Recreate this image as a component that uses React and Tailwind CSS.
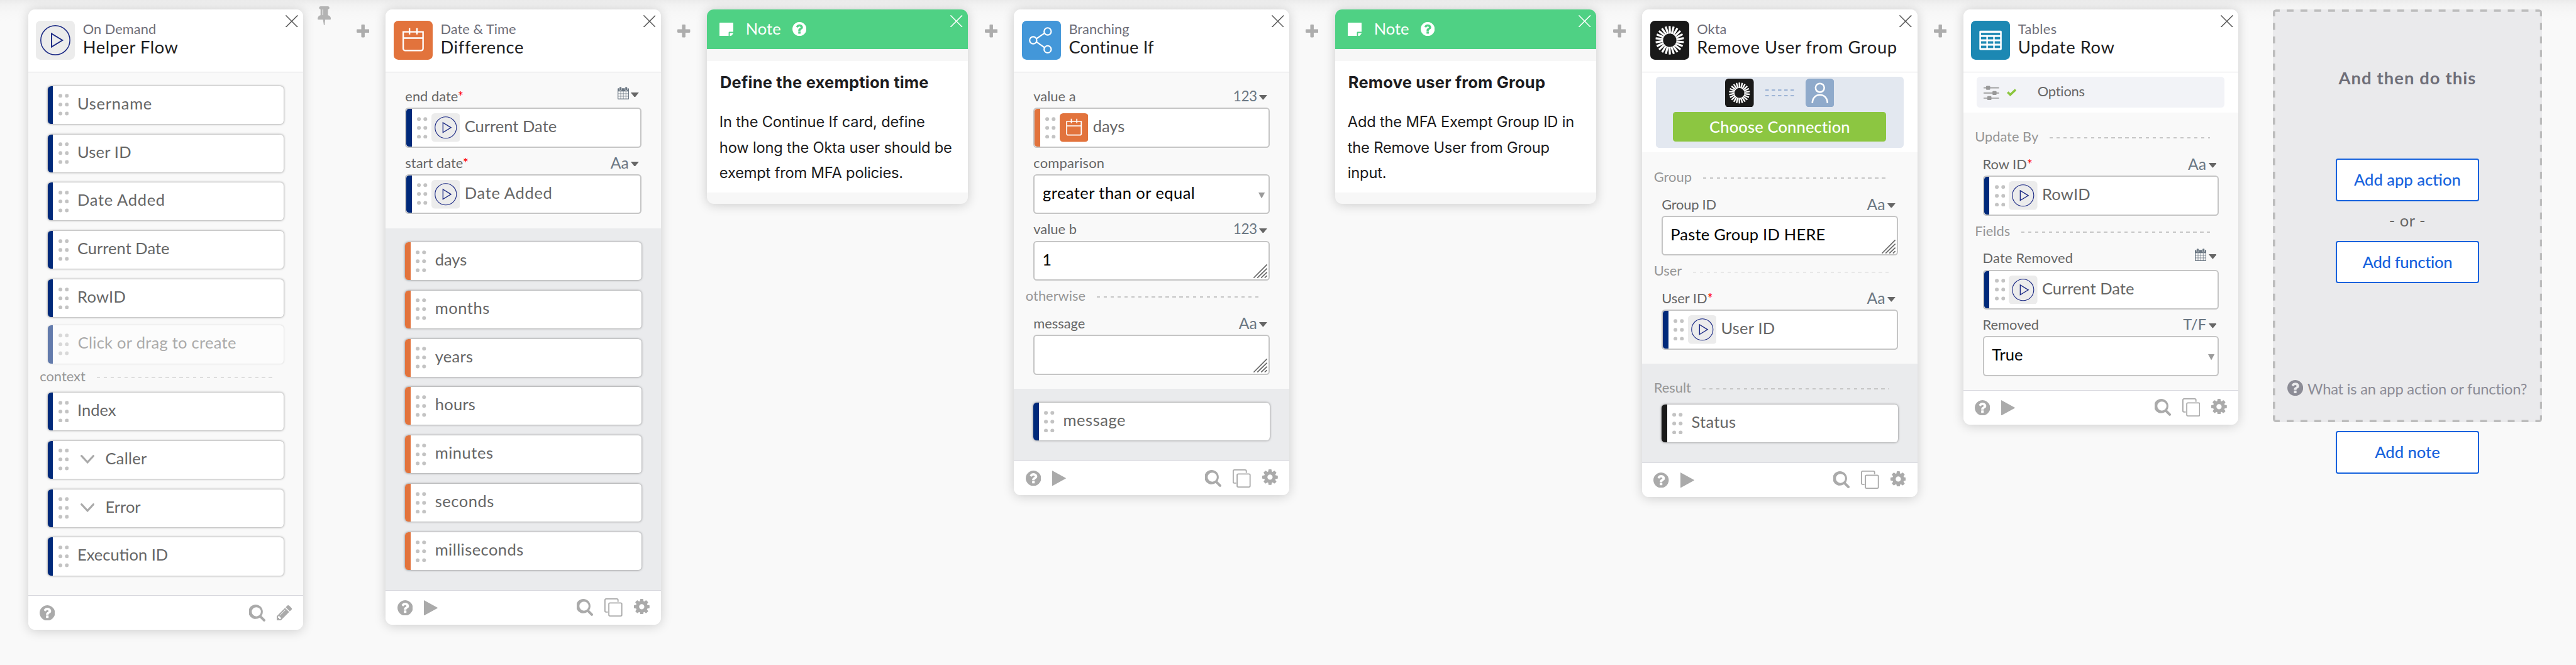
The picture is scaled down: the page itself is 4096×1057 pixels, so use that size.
import React from "react";

/* ---------- icons ---------- */

function HelpIcon({ className }) {
  return (
    <svg viewBox="128 128 1536 1536" fill="currentColor" className={className}>
      <path d="M1024 1376v-192q0-14-9-23t-23-9h-192q-14 0-23 9t-9 23v192q0 14 9 23t23 9h192q14 0 23-9t9-23zM1280 704q0-88-55.5-163t-138.5-116-170-41q-243 0-371 213-15 24 8 42l132 100q7 6 19 6 16 0 25-12 53-68 86-92 34-24 86-24 48 0 85.5 26t37.5 59q0 38-20 61t-68 45q-63 28-115.5 86.5t-52.5 125.5v36q0 14 9 23t23 9h192q14 0 23-9t9-23q0-19 21.5-49.5t54.5-49.5q32-18 49-28.5t46-35 44.5-48 28-60.5 12.5-81zM1664 896q0 209-103 385.5t-279.5 279.5-385.5 103-385.5-103-279.5-279.5-103-385.5 103-385.5 279.5-279.5 385.5-103 385.5 103 279.5 279.5 103 385.5z" />
    </svg>
  );
}

function SearchIcon() {
  return (
    <svg viewBox="64 128 1600 1664" fill="currentColor" className="h-[14.8px] w-[14.4px]">
      <path d="M1216 832q0-185-131.5-316.5t-316.5-131.5-316.5 131.5-131.5 316.5 131.5 316.5 316.5 131.5 316.5-131.5 131.5-316.5zM1664 1664q0 52-38 90t-90 38q-54 0-90-38l-343-342q-179 124-399 124-143 0-273.5-55.5t-225-150-150-225-55.5-273.5 55.5-273.5 150-225 225-150 273.5-55.5 273.5 55.5 225 150 150 225 55.5 273.5q0 220-124 399l343 343q37 37 37 90z" />
    </svg>
  );
}

function GearIcon() {
  return (
    <svg viewBox="128 128 1536 1536" fill="currentColor" className="mb-[2px] size-[13.6px]">
      <path d="M1152 896q0-106-75-181t-181-75-181 75-75 181 75 181 181 75 181-75 75-181zm512-109v222q0 12-8 23t-20 13l-185 28q-19 54-39 91 35 50 107 138 10 12 10 25t-9 23q-27 37-99 108t-94 71q-12 0-26-9l-138-108q-44 23-91 38-16 136-29 186-7 28-36 28h-222q-14 0-24.5-8.5t-11.5-21.5l-28-184q-49-16-90-37l-141 107q-10 9-25 9-14 0-25-11-126-114-165-168-7-10-7-23 0-12 8-23 15-21 51-66.5t54-70.5q-27-50-41-99l-183-27q-13-2-21-12.5t-8-23.5v-222q0-12 8-23t19-13l186-28q14-46 39-92-40-57-107-138-10-12-10-24 0-10 9-23 26-36 98.5-107.5t94.5-71.5q13 0 26 10l138 107q44-23 91-38 16-136 29-186 7-28 36-28h222q14 0 24.5 8.5t11.5 21.5l28 184q49 16 90 37l142-107q9-9 24-9 13 0 25 10 129 119 165 170 7 8 7 22 0 12-8 23-15 21-51 66.5t-54 70.5q26 50 41 98l183 28q13 2 21 12.5t8 23.5z" />
    </svg>
  );
}

function PencilIcon() {
  return (
    <svg viewBox="128 149 1515 1515" fill="currentColor" className="size-[13.2px]">
      <path d="M491 1536l91-91-235-235-91 91v107h128v128h107zm523-928q0-22-22-22-10 0-17 7l-542 542q-7 7-7 17 0 22 22 22 10 0 17-7l542-542q7-7 7-17zm-54-192l416 416-832 832h-416v-416zm683 96q0 53-37 90l-166 166-416-416 166-165q36-38 90-38 53 0 91 38l235 234q37 39 37 91z" />
    </svg>
  );
}

function PinIcon() {
  return (
    <svg viewBox="320 128 1152 1664" fill="currentColor" className="h-[16.8px] w-[11.6px] text-[#b3b3b3]">
      <path d="M800 864v-448q0-14-9-23t-23-9-23 9-9 23v448q0 14 9 23t23 9 23-9 9-23zm672 352q0 26-19 45t-45 19h-429l-51 483q-2 12-10.5 20.5t-20.5 8.5h-1q-27 0-32-27l-76-485h-404q-26 0-45-19t-19-45q0-123 78.5-221.5t177.5-98.5v-512q-52 0-90-38t-38-90 38-90 90-38h640q52 0 90 38t38 90-38 90-90 38v512q99 0 177.5 98.5t78.5 221.5z" />
    </svg>
  );
}

function CopyIcon() {
  return (
    <svg viewBox="0 0 15.7 16" fill="none" stroke="currentColor" strokeWidth="1" className="h-[16px] w-[15.7px]">
      <path d="M3.1 12H1.5a1 1 0 0 1-1-1V1.5a1 1 0 0 1 1-1h9.4a1 1 0 0 1 1 1v1.6" />
      <rect x="3.9" y="4" width="11.3" height="11.4" rx="1" />
    </svg>
  );
}

function PlayGlyph() {
  return (
    <svg viewBox="0 0 12 13.4" fill="currentColor" className="h-[13.4px] w-[12px]">
      <path d="M0.3 0.1Q0 -0.1 0 0.4V13Q0 13.5 0.3 13.3L11.8 6.95Q12.2 6.7 11.8 6.45Z" />
    </svg>
  );
}

function CloseIcon({ className }) {
  return (
    <svg viewBox="0 0 10.8 10.8" fill="none" stroke="currentColor" strokeWidth="0.85" className={className}>
      <path d="M0.2 0.2L10.6 10.6M10.6 0.2L0.2 10.6" />
    </svg>
  );
}

function PlusIcon() {
  return (
    <svg viewBox="0 0 11.2 11.2" fill="#adadad" className="size-[11.2px]">
      <rect x="0" y="4.1" width="11.2" height="3" rx="0.6" />
      <rect x="4.1" y="0" width="3" height="11.2" rx="0.6" />
    </svg>
  );
}

function FlowTile({ className }) {
  return (
    <svg viewBox="0 0 34 34" fill="none" className={className}>
      <rect width="34" height="34" rx="4" fill="#ececec" />
      <circle cx="17" cy="17" r="12.7" stroke="#1d2b86" strokeWidth="0.85" />
      <path d="M13.7 11.2V22.8L23.2 17Z" stroke="#1d2b86" strokeWidth="1.05" />
    </svg>
  );
}

function DateTile({ className }) {
  return (
    <svg viewBox="0 0 34 34" fill="none" stroke="#fff" strokeWidth="1.3" className={className}>
      <rect width="34" height="34" rx="4" fill="#e2733c" stroke="none" />
      <path d="M8.3 9.7H25.6V24.2a1.7 1.7 0 0 1-1.7 1.7H10a1.7 1.7 0 0 1-1.7-1.7Z" />
      <path d="M8.3 15.1H25.6M13.8 6.5V12M20.3 6.5V12" />
    </svg>
  );
}

function BranchTile({ className }) {
  return (
    <svg viewBox="0 0 34 34" fill="none" stroke="#fff" strokeWidth="1.15" className={className}>
      <rect width="34" height="34" rx="4" fill="#4397d9" stroke="none" />
      <circle cx="9.8" cy="17" r="3.1" />
      <circle cx="22.4" cy="9.3" r="3.1" />
      <circle cx="22.4" cy="24.9" r="3.1" />
      <path d="M12.7 15.6L19.5 10.9M12.7 18.5L19.5 23.3" />
    </svg>
  );
}

const RAYS = Array.from({ length: 22 }, (_, i) => (360 / 22) * i);

function OktaTile({ className }) {
  return (
    <svg viewBox="0 0 34 34" fill="none" stroke="#fff" strokeWidth="1.75" className={className}>
      <rect width="34" height="34" rx="4" fill="#191919" stroke="none" />
      {RAYS.map((a) => (
        <path key={a} d="M17.2 11.2L16.9 4.6" transform={`rotate(${a} 17 17)`} />
      ))}
    </svg>
  );
}

function TableTile({ className }) {
  return (
    <svg viewBox="0 0 34 34" className={className}>
      <rect width="34" height="34" rx="4" fill="#1c88b3" />
      <rect x="7.3" y="8.7" width="19.5" height="16.8" rx="0.9" fill="#fff" />
      <g fill="#1c88b3">
        <rect x="8.7" y="10.5" width="16.7" height="2" />
        {[14.1, 17.9, 21.7].map((y) =>
          [8.7, 14.7, 20.7].map((x) => <rect key={`${x}-${y}`} x={x} y={y} width="4.7" height="2.1" />)
        )}
      </g>
    </svg>
  );
}

function PersonTile() {
  return (
    <svg viewBox="0 0 25 25" fill="none" stroke="#fff" strokeWidth="1.4" className="size-[25px]">
      <rect width="25" height="25" rx="3.2" fill="#8faacb" stroke="none" />
      <circle cx="12.5" cy="8" r="3.8" />
      <path d="M5.9 21.4C5.9 17 8.8 14.1 12.5 14.1S19.1 17 19.1 21.4" />
    </svg>
  );
}

function NoteIcon() {
  return (
    <svg viewBox="0 0 12.2 12" fill="#fff" className="mt-[11.5px] h-[12px] w-[12.2px]">
      <path d="M.6 0H11.6a.6 .6 0 0 1 .6 .6V8H8.7a.7 .7 0 0 0-.7 .7V12H.6a.6 .6 0 0 1-.6-.6V.6A.6 .6 0 0 1 .6 0Z" />
      <path d="M9 9H12.1Q12 9.7 11.4 10.3L10.2 11.5Q9.7 11.9 9 12Z" />
    </svg>
  );
}

function CalendarGlyph() {
  return (
    <svg viewBox="0 0 10 11" className="mb-[2.6px] h-[11px] w-[10px]">
      <rect y="1.3" width="10" height="9.7" rx="0.7" fill="#6b7783" />
      <rect x="1.5" y="0" width="2" height="3.1" rx="0.8" fill="#6b7783" stroke="#f9f9f9" strokeWidth="0.35" />
      <rect x="6.5" y="0" width="2" height="3.1" rx="0.8" fill="#6b7783" stroke="#f9f9f9" strokeWidth="0.35" />
      <g fill="#f9f9f9">
        {[4, 6.2, 8.4].map((y) =>
          [0.7, 2.95, 5.2, 7.45].map((x) => <rect key={`${x}-${y}`} x={x} y={y} width="1.85" height="1.8" />)
        )}
      </g>
    </svg>
  );
}

function SlidersIcon() {
  return (
    <svg viewBox="0 0 13.5 13" className="h-[13px] w-[13.5px]" fill="#999" stroke="#999" strokeWidth="0.9">
      <path d="M0 2H13.5M0 6.5H13.5M0 11H13.5" />
      <rect x="2.6" y="0.7" width="2.7" height="2.6" rx="0.3" />
      <rect x="8.2" y="5.2" width="2.7" height="2.6" rx="0.3" />
      <rect x="3.7" y="9.7" width="2.7" height="2.6" rx="0.3" />
    </svg>
  );
}

function ResizeGrip() {
  return (
    <svg viewBox="0 0 12 12" className="absolute right-[1px] bottom-[1px] size-[12px]" stroke="#666" strokeWidth="0.9" fill="none">
      <path d="M0.2 11.9L11.9 0.2M3.4 11.9L11.9 3.6M6.7 11.9L11.9 6.9M9.8 11.9L11.9 10" />
    </svg>
  );
}

/* ---------- shared pieces ---------- */

function Dots() {
  return (
    <svg viewBox="0 0 9 19" fill="#c3c3c3" className="h-[19px] w-[9px] shrink-0">
      {[1.75, 9.5, 17.25].map((y) => (
        <React.Fragment key={y}>
          <circle cx="1.7" cy={y} r="1.65" />
          <circle cx="7.3" cy={y} r="1.65" />
        </React.Fragment>
      ))}
    </svg>
  );
}

function Item({ label, bar = "bg-[#00297a]", tracking = "", chevron, ghost }) {
  return (
    <div
      className={`flex h-[33px] rounded-[3px] bg-white ${
        ghost ? "opacity-60 shadow-[0_0_1.5px_rgba(0,0,0,0.3)]" : "shadow-[0_0_2px_rgba(0,0,0,0.5)]"
      }`}
    >
      <div className={`w-[4.8px] rounded-l-[3px] ${bar}`} />
      <div className="ml-[4.6px] flex items-center">
        <Dots />
      </div>
      {chevron && (
        <svg viewBox="0 0 12.2 7.6" className="mt-[12.2px] ml-[10.4px] h-[7.6px] w-[12.2px]" fill="none" stroke="#aaa" strokeWidth="1.7" strokeLinecap="round">
          <path d="M0.9 0.9L6.1 6.5L11.3 0.9" />
        </svg>
      )}
      <span className={`text-[14px] leading-[30.6px] ${chevron ? "ml-[9.4px]" : ghost ? "ml-[8px]" : "ml-[7.6px]"} ${ghost ? "text-[#777]" : "text-[#666]"} ${tracking}`}>
        {label}
      </span>
    </div>
  );
}

function Divider({ label, className = "", tracking = "" }) {
  return (
    <div className={`flex h-[24px] pr-[25px] pl-[10.2px] ${className}`}>
      <span className={`pt-[4.9px] text-[12px] leading-[16px] text-[#969696] ${tracking}`}>{label}</span>
      <span className="mt-[13.8px] ml-[9.8px] h-[1px] flex-1 bg-[repeating-linear-gradient(90deg,#c6c6c6_0_2.9px,transparent_2.9px_6px)]" />
    </div>
  );
}

function Caret() {
  return (
    <svg viewBox="0 0 7 4.2" className="mb-[4.6px] ml-[2px] h-[4.2px] w-[7px]" fill="#666">
      <path d="M0 0.2Q0 0 0.3 0H6.7Q7 0 7 0.2L3.8 4Q3.5 4.3 3.2 4Z" />
    </svg>
  );
}

function TypeLabel({ type }) {
  if (!type) return null;
  return (
    <div className="flex items-end text-[#6b7783]">
      {type === "date" && <CalendarGlyph />}
      {type === "Aa" && <span className="text-[13.6px] leading-[16px]">Aa</span>}
      {type === "123" && <span className="text-[12.4px] leading-[16px] tracking-[-0.02em]">123</span>}
      {type === "T/F" && <span className="text-[13px] leading-[16px] font-medium">T/F</span>}
      <Caret />
    </div>
  );
}

function Field({ label, required, type, tracking = "", children }) {
  return (
    <div className="px-[17px]">
      <div className="flex h-[23.2px] items-start justify-between pt-[4.9px] pr-[2px]">
        <span className="text-[12px] leading-[16px] text-[#666]">
          <span className={tracking}>{label}</span>
          {required && <span className="text-[#f00]">*</span>}
        </span>
        <TypeLabel type={type} />
      </div>
      <div className="relative flex h-[34.8px] rounded-[3px] border-[1.1px] border-[#c5c5c5] bg-white">{children}</div>
    </div>
  );
}

function Pill({ label, bar = "bg-[#00297a]", tile, tracking = "" }) {
  return (
    <>
      <div className={`w-[4.7px] rounded-l-[2.4px] ${bar}`} />
      <div className="ml-[4.6px] flex items-center">
        <Dots />
      </div>
      <div className="ml-[3.4px] flex items-center">{tile || <FlowTile className="size-[25px]" />}</div>
      <span className={`ml-[4px] text-[14px] leading-[30.6px] text-[#666] ${tracking}`}>{label}</span>
    </>
  );
}

function SelectBody({ label, tracking = "" }) {
  return (
    <>
      <span className={`ml-[7px] flex-1 text-[14px] leading-[30px] text-black ${tracking}`}>{label}</span>
      <svg viewBox="0 0 5.6 5.2" className="mt-[14.6px] mr-[2.8px] h-[5.2px] w-[5.6px]" fill="#9a9a9a">
        <path d="M0 0H5.6L2.8 5.2Z" />
      </svg>
    </>
  );
}

function AreaBody({ label = "", tracking = "" }) {
  return (
    <>
      <span className={`ml-[6.6px] text-[14px] leading-[30px] text-black ${tracking}`}>{label}</span>
      <ResizeGrip />
    </>
  );
}

const cardShadow = "shadow-[0_1px_10px_rgba(0,0,0,0.18)]";

function Card({ tile, app, title, titleTracking = "", appTracking = "", simple, children }) {
  return (
    <section className={`relative w-[240px] shrink-0 overflow-hidden rounded-[6px] bg-[#f9f9f9] ${cardShadow}`}>
      <header className="flex h-[55px] border-b border-[#d8d8de] bg-white">
        <div className="mt-[10px] ml-[7px]">{tile}</div>
        <div className="mt-[10.3px] ml-[6.8px]">
          <div className={`text-[12px] leading-[14px] text-[#6e6e78] ${appTracking}`}>{app}</div>
          <div className={`text-[15px] leading-[18px] whitespace-nowrap text-[#1d1d21] ${titleTracking}`}>{title}</div>
        </div>
      </header>
      <CloseIcon className="absolute top-[5px] right-[4.7px] size-[10.8px] text-[#5e5e5e]" />
      {children}
      <footer className="flex h-[30px] items-center border-t border-[#d8d8de] bg-white px-[10px] text-[#aaa]">
        <HelpIcon className="size-[13.4px]" />
        {!simple && (
          <div className="ml-[10px]">
            <PlayGlyph />
          </div>
        )}
        <div className="ml-auto flex items-center gap-[9.8px]">
          <SearchIcon />
          {simple ? (
            <PencilIcon />
          ) : (
            <>
              <CopyIcon />
              <GearIcon />
            </>
          )}
        </div>
      </footer>
    </section>
  );
}

function Outputs({ children }) {
  return <div className="bg-[#eaebed] pb-[17.6px]">{children}</div>;
}

function NoteCard({ heading, headingTracking, lines }) {
  return (
    <section className={`relative h-[170px] w-[228px] shrink-0 overflow-hidden rounded-[6px] bg-[#f7f7f7] ${cardShadow}`}>
      <header className="flex h-[35px] bg-[#4fd184] pl-[11.2px] text-white">
        <NoteIcon />
        <span className="ml-[10.6px] text-[14px] leading-[33.4px]">Note</span>
        <HelpIcon className="mt-[11px] ml-[10.2px] size-[12.2px]" />
      </header>
      <CloseIcon className="absolute top-[5px] right-[4.8px] size-[10.6px] text-white" />
      <div className="mt-[10px] h-[115px] bg-white pt-[8.9px] pl-[11.6px] font-['Inter',sans-serif] text-[#1d1d21]">
        <h3 className={`text-[14px] leading-[20px] font-bold ${headingTracking}`}>{heading}</h3>
        <div className="mt-[13.6px] -ml-[0.6px] text-[13px] leading-[22.25px] tracking-[-0.008em]">
          {lines.map((l) => (
            <div key={l}>{l}</div>
          ))}
        </div>
      </div>
    </section>
  );
}

function Connector({ pin }) {
  return (
    <div className={`flex shrink-0 ${pin ? "w-[72px]" : "w-[40px]"}`}>
      {pin && (
        <div className="-mt-[2.6px] flex w-[32px] justify-center pl-[4.4px]">
          <PinIcon />
        </div>
      )}
      <div className="flex flex-1 justify-center pt-[13.6px]">
        <PlusIcon />
      </div>
    </div>
  );
}

function OutlineButton({ children, tracking = "" }) {
  return (
    <button className={`block h-[37px] w-[125px] rounded-[2px] border-[1.1px] border-[#1662dd] bg-white text-center text-[14px] leading-[31.8px] font-medium text-[#1662dd] ${tracking}`}>
      {children}
    </button>
  );
}

/* ---------- page ---------- */

const outputs = [
  ["days", ""],
  ["months", "tracking-[0.02em]"],
  ["years", "tracking-[0.01em]"],
  ["hours", "tracking-[0.01em]"],
  ["minutes", "tracking-[0.02em]"],
  ["seconds", "tracking-[0.02em]"],
  ["milliseconds", "tracking-[0.017em]"],
];

export default function App() {
  return (
    <main className="h-[579.8px] w-[2247px] overflow-hidden bg-[#f9f9f9] bg-[linear-gradient(#ebebeb,#f2f2f2_4px,#f7f7f7_11px,#f9f9f9_18px)] font-['Lato',sans-serif] [zoom:1.82288]">
      <div className="flex items-start pt-[8px] pl-[24.5px]">
        <Card simple tile={<FlowTile className="size-[34px]" />} app="On Demand" title="Helper Flow" titleTracking="tracking-[0.02em]">
          <div className="flex flex-col gap-[9.15px] px-[17px] pt-[12px]">
            <Item label="Username" tracking="tracking-[0.028em]" />
            <Item label="User ID" tracking="tracking-[0.007em]" />
            <Item label="Date Added" tracking="tracking-[0.026em]" />
            <Item label="Current Date" />
            <Item label="RowID" tracking="tracking-[0.01em]" />
            <div className="-mt-[1.8px]">
              <Item ghost label="Click or drag to create" tracking="tracking-[0.01em]" />
            </div>
          </div>
          <Divider label="context" className="-mt-[1.8px] mb-[3.2px]" />
          <div className="flex flex-col gap-[9.15px] px-[17px] pb-[17.5px]">
            <Item label="Index" />
            <Item chevron label="Caller" tracking="tracking-[0.01em]" />
            <Item chevron label="Error" />
            <Item label="Execution ID" />
          </div>
        </Card>

        <Connector pin />

        <Card tile={<DateTile className="size-[34px]" />} app="Date & Time" title="Difference" titleTracking="tracking-[0.022em]">
          <div className="pt-[7.8px] pb-[12.2px]">
            <Field label="end date" required type="date">
              <Pill label="Current Date" />
            </Field>
            <Field label="start date" required type="Aa">
              <Pill label="Date Added" tracking="tracking-[0.026em]" />
            </Field>
          </div>
          <Outputs>
            <div className="flex flex-col gap-[9.15px] px-[17px] pt-[12.2px]">
              {outputs.map(([label, tracking]) => (
                <Item key={label} label={label} tracking={tracking} bar="bg-[#e2733c]" />
              ))}
            </div>
          </Outputs>
        </Card>

        <Connector />

        <NoteCard
          heading="Define the exemption time"
          headingTracking="tracking-[0.008em]"
          lines={["In the Continue If card, define", "how long the Okta user should be", "exempt from MFA policies."]}
        />

        <Connector />

        <Card tile={<BranchTile className="size-[34px]" />} app="Branching" title="Continue If" titleTracking="tracking-[0.006em]">
          <div className="pt-[7.8px] pb-[12.2px]">
            <Field label="value a" type="123">
              <Pill label="days" bar="bg-[#e2733c]" tile={<DateTile className="size-[25px]" />} />
            </Field>
            <Field label="comparison" tracking="tracking-[0.009em]">
              <SelectBody label="greater than or equal" tracking="tracking-[0.017em]" />
            </Field>
            <Field label="value b" type="123">
              <AreaBody label="1" />
            </Field>
            <Divider label="otherwise" />
            <Field label="message" type="Aa">
              <AreaBody />
            </Field>
          </div>
          <Outputs>
            <div className="px-[17px] pt-[12.2px]">
              <Item label="message" tracking="tracking-[0.02em]" />
            </div>
          </Outputs>
        </Card>

        <Connector />

        <NoteCard
          heading="Remove user from Group"
          headingTracking="tracking-[0.007em]"
          lines={["Add the MFA Exempt Group ID in", "the Remove User from Group", "input."]}
        />

        <Connector />

        <Card tile={<OktaTile className="size-[34px]" />} app="Okta" title="Remove User from Group" titleTracking="tracking-[0.023em]">
          <div className="bg-white px-[12px] pt-[4px] pb-[4px]">
            <div className="flex h-[61.8px] flex-col items-center rounded-[3px] bg-[#e3e8f0] pt-[1.5px]">
              <div className="flex items-center gap-[10px]">
                <OktaTile className="size-[25px]" />
                <svg viewBox="0 0 25 6" className="h-[6px] w-[25px]" stroke="#8fa9cf" strokeWidth="0.95" strokeDasharray="3 2.5">
                  <path d="M0 0.6H25M0 5.6H25" />
                </svg>
                <PersonTile />
              </div>
              <button className="mt-[4px] h-[26px] w-[186px] rounded-[2.5px] bg-[#8cc641] text-center text-[14px] leading-[24.6px] font-medium tracking-[0.006em] text-white">
                Choose Connection
              </button>
            </div>
          </div>
          <div className="pt-[8.2px] pb-[12.2px]">
            <Divider label="Group" />
            <Field label="Group ID" type="Aa" tracking="tracking-[-0.01em]">
              <AreaBody label="Paste Group ID HERE" tracking="tracking-[0.008em]" />
            </Field>
            <Divider label="User" />
            <Field label="User ID" required type="Aa">
              <Pill label="User ID" tracking="tracking-[0.007em]" />
            </Field>
          </div>
          <Outputs>
            <Divider label="Result" className="pt-[7.8px] pb-[27.7px]" />
            <div className="px-[17px]">
              <Item label="Status" bar="bg-[#1a1a1a]" tracking="tracking-[0.01em]" />
            </div>
          </Outputs>
        </Card>

        <Connector />

        <Card tile={<TableTile className="size-[34px]" />} app="Tables" appTracking="tracking-[0.016em]" title="Update Row" titleTracking="tracking-[0.022em]">
          <div className="bg-white px-[12px] py-[4px]">
            <div className="flex h-[27px] rounded-[3px] bg-[#f2f3f7]">
              <div className="mt-[7.4px] ml-[5.8px]">
                <SlidersIcon />
              </div>
              <svg viewBox="0 0 8.4 6.6" className="mt-[10.4px] ml-[6.6px] h-[6.6px] w-[8.4px]" fill="none" stroke="#8cc63f" strokeWidth="2">
                <path d="M0.7 3L3 5.2L7.7 0.8" />
              </svg>
              <span className="ml-[18.6px] text-[12px] leading-[24.8px] tracking-[-0.01em] text-[#666]">Options</span>
            </div>
          </div>
          <div className="pt-[8px] pb-[12.2px]">
            <Divider label="Update By" />
            <Field label="Row ID" required type="Aa">
              <Pill label="RowID" tracking="tracking-[0.01em]" />
            </Field>
            <Divider label="Fields" />
            <Field label="Date Removed" type="date" tracking="tracking-[0.009em]">
              <Pill label="Current Date" />
            </Field>
            <Field label="Removed" type="T/F">
              <SelectBody label="True" />
            </Field>
          </div>
        </Card>

        <div className="ml-[30px] flex w-[235px] shrink-0 flex-col items-center">
          <div className="relative flex h-[360px] w-[235px] flex-col items-center overflow-hidden rounded-[3px] bg-[#eaeaec]">
            <svg viewBox="0 0 235 360" className="absolute inset-0 h-[360px] w-[235px]" stroke="#bcbcbc" strokeWidth="2">
              <path d="M0 1H235M0 359H235" strokeDasharray="6 6.053" />
              <path d="M1 0V360M234 0V360" strokeDasharray="6 5.8" />
            </svg>
            <h2 className="mt-[51.4px] text-[15px] leading-[18px] font-bold tracking-[0.041em] text-[#6e6e78]">And then do this</h2>
            <div className="mt-[61.1px]">
              <OutlineButton>Add app action</OutlineButton>
            </div>
            <div className="h-[34.5px] text-[14px] leading-[33px] tracking-[0.02em] text-[#666]">- or -</div>
            <OutlineButton tracking="tracking-[-0.012em]">Add function</OutlineButton>
            <div className="mt-[81.4px] flex w-full items-center pl-[12.5px] text-[#8c8c96]">
              <HelpIcon className="size-[13.8px]" />
              <span className="ml-[4px] pt-[2px] text-[13px] leading-[18px] tracking-[-0.008em] whitespace-nowrap">What is an app action or function?</span>
            </div>
          </div>
          <div className="mt-[8px]">
            <OutlineButton>Add note</OutlineButton>
          </div>
        </div>
      </div>
    </main>
  );
}
